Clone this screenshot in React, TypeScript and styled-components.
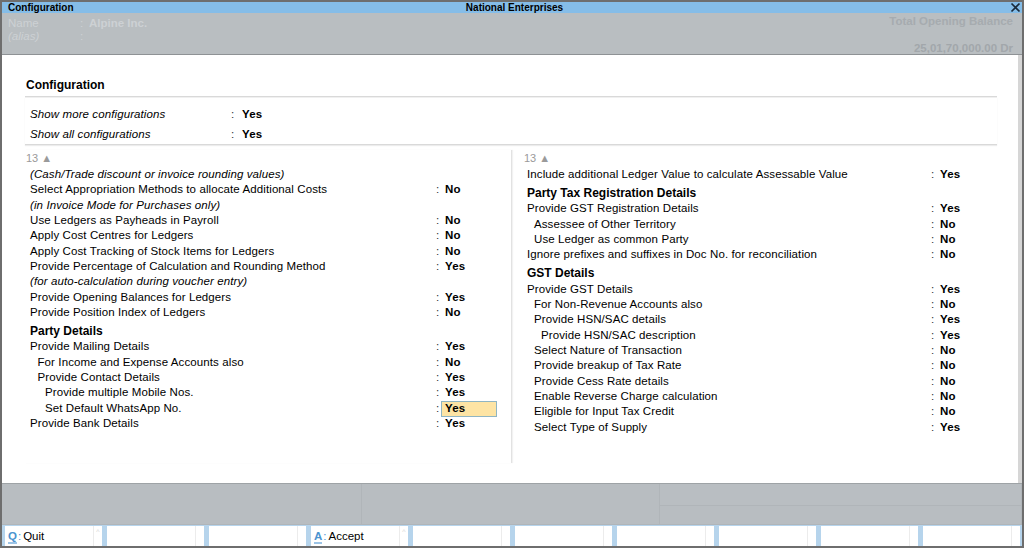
import React from 'react';
import styled, { createGlobalStyle } from 'styled-components';

const GlobalStyle = createGlobalStyle`
  html, body {
    margin: 0;
    padding: 0;
    background: #ffffff;
  }
  body {
    font-family: 'Liberation Sans', Arial, sans-serif;
    color: #000000;
  }
  * {
    box-sizing: border-box;
  }
`;

// Window frame
const Frame = styled.div`
  width: 1024px;
  height: 548px;
  border: 2px solid #6e6e6e;
  display: flex;
  flex-direction: column;
  overflow: hidden;
  background: #ffffff;
`;

const TitleBar = styled.div`
  height: 11px;
  background: #85bde8;
  display: grid;
  grid-template-columns: 1fr auto 1fr;
  align-items: center;
  padding: 0 1px 0 6px;
  font-size: 10px;
  font-weight: bold;
  line-height: 11px;
`;

const TitleRight = styled.div`
  display: flex;
  justify-content: flex-end;
  align-items: center;
`;

// Ledger header (faded)
const Header = styled.div`
  height: 42px;
  background: #b9bec1;
  border-bottom: 1px solid #8e9295;
  display: flex;
  justify-content: space-between;
  padding: 2px 9px 0 6px;
  font-size: 11.5px;
  overflow: hidden;
`;

const HeaderFields = styled.div`
  display: grid;
  grid-template-columns: 72px 9px auto;
  grid-auto-rows: 13px;
  line-height: 13px;
  margin-top: 2px;
  color: #cdd1d4;
`;

const FieldName = styled.span<{ $italic?: boolean }>`
  font-style: ${(p) => (p.$italic ? 'italic' : 'normal')};
`;

const FieldValue = styled.span`
  font-weight: bold;
`;

const Balance = styled.div`
  display: flex;
  flex-direction: column;
  align-items: flex-end;
  font-weight: bold;
  color: #a6abaf;
  line-height: 13px;
`;

const BalanceAmount = styled.span`
  margin-top: 14px;
  color: #a2a7ab;
`;

// Main panel
const Panel = styled.div`
  height: 428px;
  background: #ffffff;
  padding: 0 21px 0 23px;
  border-right: 4px solid #d6d6d6;
`;

const Heading = styled.div`
  font-size: 12px;
  font-weight: bold;
  line-height: 14px;
  padding: 23px 0 4px 1px;
  border-bottom: 1px solid #d9d9d9;
  box-shadow: 0 1px 0 #f0f0f0;
`;

const Options = styled.div`
  padding: 7px 0 0;
  border-bottom: 1px solid #d9d9d9;
  box-shadow: 0 1px 1px #ececec;
`;

const OptionRow = styled.div`
  display: grid;
  grid-template-columns: 206px 7px auto;
  height: 20px;
  line-height: 20px;
  font-size: 11.5px;
  letter-spacing: 0.1px;
`;

const OptionLabel = styled.span`
  font-style: italic;
  padding-left: 5px;
`;

const Colon = styled.span`
  color: #333333;
`;

const Value = styled.span<{ $active?: boolean }>`
  font-weight: bold;
  padding-left: 4px;
  ${(p) =>
    p.$active &&
    `
    background: #fde4a4;
    border: 1px solid #8fb5c3;
    padding-left: 3px;
    line-height: 13px;
    height: 16px;
    width: 56px;
  `}
`;

const Columns = styled.div`
  display: grid;
  grid-template-columns: 487px 1fr;
  margin-top: 5px;
`;

const Column = styled.div<{ $divider?: boolean }>`
  padding: 1px 0 28px;
  border-right: ${(p) => (p.$divider ? '1px solid #e2e2e2' : 'none')};
  box-shadow: ${(p) => (p.$divider ? '1px 0 1px #f2f2f2' : 'none')};
`;

const Counter = styled.div<{ $pad: number }>`
  padding-left: ${(p) => p.$pad}px;
  font-size: 11px;
  color: #9a9a9a;
  height: 16px;
  line-height: 15px;
`;

const Row = styled.div<{ $labelWidth: number }>`
  display: grid;
  grid-template-columns: ${(p) => p.$labelWidth}px 5px auto;
  align-items: center;
  height: 15.35px;
  line-height: 15.35px;
  font-size: 11.5px;
  letter-spacing: 0.1px;
`;

const Label = styled.span<{ $pad: number; $italic?: boolean }>`
  padding-left: ${(p) => p.$pad}px;
  font-style: ${(p) => (p.$italic ? 'italic' : 'normal')};
  white-space: nowrap;
`;

const GroupTitle = styled.div<{ $pad: number }>`
  padding-left: ${(p) => p.$pad}px;
  font-size: 12px;
  font-weight: bold;
  height: 15.35px;
  line-height: 15.35px;
  margin-top: 3.6px;
`;

// Lower status area
const StatusArea = styled.div`
  height: 42px;
  background: #b8bdc1;
  border-top: 1px solid #9ea3a6;
  display: grid;
  grid-template-columns: 360px 298px 1fr;
`;

const StatusPane = styled.div<{ $split?: boolean }>`
  border-right: 1px solid #b0b5b9;
  border-bottom: 1px solid #b0b5b9;
  ${(p) =>
    p.$split &&
    `
    background: linear-gradient(#b9bec2 0 21px, #b0b5b9 21px 22px, #b8bdc1 22px);
  `}
`;

// Function key bar
const KeyBar = styled.div`
  height: 21px;
  background: #b6d4ec;
  display: flex;
  gap: 5px;
  padding: 1px 2px 0 3px;
`;

const KeyCell = styled.div`
  flex: 1;
  background: #ffffff;
  display: flex;
  align-items: center;
  font-size: 11.5px;
`;

const KeyText = styled.span`
  flex: 1;
  padding-left: 3px;
  white-space: nowrap;
`;

const KeyLetter = styled.span`
  color: #4b93cf;
  font-weight: bold;
  border-bottom: 2px solid #9cc4e6;
  line-height: 12px;
`;

const KeyColon = styled.span`
  color: #4b93cf;
  margin: 0 2px 0 1px;
`;

const KeyMark = styled.span`
  width: 9px;
  height: 100%;
  border-left: 1px solid #ececec;
  color: #d5d5d5;
  font-size: 7px;
  text-align: center;
  line-height: 12px;
`;

type Item =
  | { kind: 'row'; label: string; value?: string; level?: number; italic?: boolean; active?: boolean }
  | { kind: 'group'; label: string };

const leftItems: Item[] = [
  { kind: 'row', label: '(Cash/Trade discount or invoice rounding values)', italic: true },
  { kind: 'row', label: 'Select Appropriation Methods to allocate Additional Costs', value: 'No' },
  { kind: 'row', label: '(in Invoice Mode for Purchases only)', italic: true },
  { kind: 'row', label: 'Use Ledgers as Payheads in Payroll', value: 'No' },
  { kind: 'row', label: 'Apply Cost Centres for Ledgers', value: 'No' },
  { kind: 'row', label: 'Apply Cost Tracking of Stock Items for Ledgers', value: 'No' },
  { kind: 'row', label: 'Provide Percentage of Calculation and Rounding Method', value: 'Yes' },
  { kind: 'row', label: '(for auto-calculation during voucher entry)', italic: true },
  { kind: 'row', label: 'Provide Opening Balances for Ledgers', value: 'Yes' },
  { kind: 'row', label: 'Provide Position Index of Ledgers', value: 'No' },
  { kind: 'group', label: 'Party Details' },
  { kind: 'row', label: 'Provide Mailing Details', value: 'Yes' },
  { kind: 'row', label: 'For Income and Expense Accounts also', value: 'No', level: 1 },
  { kind: 'row', label: 'Provide Contact Details', value: 'Yes', level: 1 },
  { kind: 'row', label: 'Provide multiple Mobile Nos.', value: 'Yes', level: 2 },
  { kind: 'row', label: 'Set Default WhatsApp No.', value: 'Yes', level: 2, active: true },
  { kind: 'row', label: 'Provide Bank Details', value: 'Yes' },
];

const rightItems: Item[] = [
  { kind: 'row', label: 'Include additional Ledger Value to calculate Assessable Value', value: 'Yes' },
  { kind: 'group', label: 'Party Tax Registration Details' },
  { kind: 'row', label: 'Provide GST Registration Details', value: 'Yes' },
  { kind: 'row', label: 'Assessee of Other Territory', value: 'No', level: 1 },
  { kind: 'row', label: 'Use Ledger as common Party', value: 'No', level: 1 },
  { kind: 'row', label: 'Ignore prefixes and suffixes in Doc No. for reconciliation', value: 'No' },
  { kind: 'group', label: 'GST Details' },
  { kind: 'row', label: 'Provide GST Details', value: 'Yes' },
  { kind: 'row', label: 'For Non-Revenue Accounts also', value: 'No', level: 1 },
  { kind: 'row', label: 'Provide HSN/SAC details', value: 'Yes', level: 1 },
  { kind: 'row', label: 'Provide HSN/SAC description', value: 'Yes', level: 2 },
  { kind: 'row', label: 'Select Nature of Transaction', value: 'No', level: 1 },
  { kind: 'row', label: 'Provide breakup of Tax Rate', value: 'No', level: 1 },
  { kind: 'row', label: 'Provide Cess Rate details', value: 'No', level: 1 },
  { kind: 'row', label: 'Enable Reverse Charge calculation', value: 'No', level: 1 },
  { kind: 'row', label: 'Eligible for Input Tax Credit', value: 'No', level: 1 },
  { kind: 'row', label: 'Select Type of Supply', value: 'Yes', level: 1 },
];

const CloseIcon = () => (
  <svg width="11" height="11" viewBox="0 0 11 11">
    <path d="M1.5 1.5 L9.5 9.5 M9.5 1.5 L1.5 9.5" stroke="#1a2a3a" strokeWidth="1.7" />
  </svg>
);

const ConfigColumn = ({
  items,
  base,
  counterPad,
  labelWidth,
  step,
  divider,
}: {
  items: Item[];
  base: number;
  counterPad: number;
  labelWidth: number;
  step: number;
  divider?: boolean;
}) => (
  <Column $divider={divider}>
    <Counter $pad={counterPad}>13 ▲</Counter>
    {items.map((item, i) =>
      item.kind === 'group' ? (
        <GroupTitle key={i} $pad={base}>
          {item.label}
        </GroupTitle>
      ) : (
        <Row key={i} $labelWidth={labelWidth}>
          <Label $pad={base + (item.level || 0) * step} $italic={item.italic}>
            {item.label}
          </Label>
          {item.value ? <Colon>:</Colon> : <span />}
          {item.value ? <Value $active={item.active}>{item.value}</Value> : <span />}
        </Row>
      )
    )}
  </Column>
);

const keys: { letter?: string; label?: string }[] = [
  { letter: 'Q', label: 'Quit' },
  {},
  {},
  { letter: 'A', label: 'Accept' },
  {},
  {},
  {},
  {},
  {},
  {},
];

export default function App() {
  return (
    <>
      <GlobalStyle />
      <Frame>
        <TitleBar>
          <span>Configuration</span>
          <span>National Enterprises</span>
          <TitleRight>
            <CloseIcon />
          </TitleRight>
        </TitleBar>
        <Header>
          <HeaderFields>
            <FieldName>Name</FieldName>
            <span>:</span>
            <FieldValue>Alpine Inc.</FieldValue>
            <FieldName $italic>(alias)</FieldName>
            <span>:</span>
            <span />
          </HeaderFields>
          <Balance>
            <span>Total Opening Balance</span>
            <BalanceAmount>25,01,70,000.00 Dr</BalanceAmount>
          </Balance>
        </Header>
        <Panel>
          <Heading>Configuration</Heading>
          <Options>
            <OptionRow>
              <OptionLabel>Show more configurations</OptionLabel>
              <Colon>:</Colon>
              <Value>Yes</Value>
            </OptionRow>
            <OptionRow>
              <OptionLabel>Show all configurations</OptionLabel>
              <Colon>:</Colon>
              <Value>Yes</Value>
            </OptionRow>
          </Options>
          <Columns>
            <ConfigColumn items={leftItems} base={5} counterPad={1} labelWidth={411} step={7.5} divider />
            <ConfigColumn items={rightItems} base={15} counterPad={12} labelWidth={419} step={7} />
          </Columns>
        </Panel>
        <StatusArea>
          <StatusPane />
          <StatusPane />
          <StatusPane $split />
        </StatusArea>
        <KeyBar>
          {keys.map((k, i) => (
            <KeyCell key={i}>
              <KeyText>
                {k.letter && (
                  <>
                    <KeyLetter>{k.letter}</KeyLetter>
                    <KeyColon>:</KeyColon>
                    {k.label}
                  </>
                )}
              </KeyText>
              <KeyMark>{k.letter ? '^' : ''}</KeyMark>
            </KeyCell>
          ))}
        </KeyBar>
      </Frame>
    </>
  );
}
